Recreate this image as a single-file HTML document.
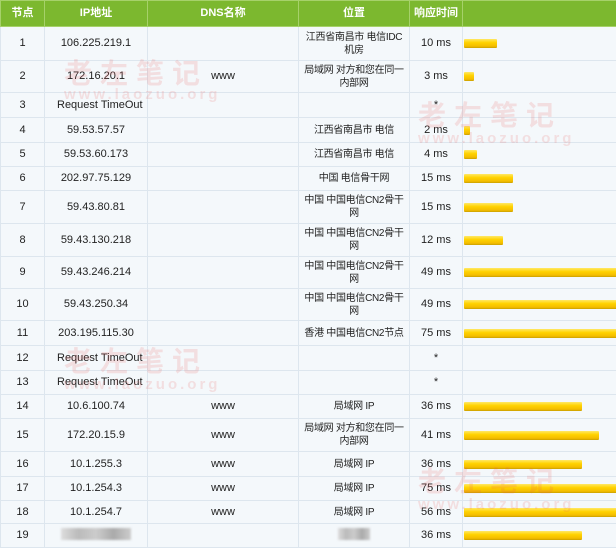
<!DOCTYPE html>
<html><head><meta charset="utf-8"><style>
*{margin:0;padding:0;box-sizing:border-box}
body{width:616px;height:546px;overflow:hidden;background:#f4f8fb;font-family:"Liberation Sans","Noto Sans CJK SC",sans-serif;font-size:11px;color:#222;position:relative}
table{border-collapse:collapse;table-layout:fixed;width:616px;position:absolute;top:0;left:0}
td,th{border:1px solid #dde6ee;text-align:center;vertical-align:middle;line-height:13px;padding:0;white-space:nowrap;overflow:hidden}
td.p{font-size:10px;letter-spacing:-0.3px}
th{background:#7cb82f;color:#fff;font-weight:bold;height:26px;border-color:#a6d16a;font-size:11px}
td.l{text-align:left;padding-left:12px}
.b{height:9px;margin-left:1px;background:linear-gradient(#ffe866,#ffd200 40%,#f4bd00 80%,#c9a000);border-radius:1px}
.wm{position:absolute;color:rgba(235,90,90,.16);font-weight:bold;pointer-events:none;white-space:nowrap}
.blur{display:inline-block;height:12px;background:linear-gradient(90deg,#ddd,#bbb,#ccc,#aaa,#ccc);filter:blur(1px)}
</style></head><body>
<table>
<colgroup><col style="width:44px"><col style="width:103px"><col style="width:151px"><col style="width:111px"><col style="width:53px"><col style="width:154px"></colgroup>
<tr><th>节点</th><th>IP地址</th><th>DNS名称</th><th>位置</th><th>响应时间</th><th></th></tr>
<tr style="height:34px"><td>1</td><td>106.225.219.1</td><td></td><td class="p">江西省南昌市 电信IDC<br>机房</td><td>10 ms</td><td><div class="b" style="width:33px"></div></td></tr>
<tr style="height:32px"><td>2</td><td>172.16.20.1</td><td>www</td><td class="p">局域网 对方和您在同一<br>内部网</td><td>3 ms</td><td><div class="b" style="width:10px"></div></td></tr>
<tr style="height:25px"><td>3</td><td class="l">Request TimeOut</td><td></td><td></td><td>*</td><td></td></tr>
<tr style="height:25px"><td>4</td><td>59.53.57.57</td><td></td><td class="p">江西省南昌市 电信</td><td>2 ms</td><td><div class="b" style="width:6px"></div></td></tr>
<tr style="height:24px"><td>5</td><td>59.53.60.173</td><td></td><td class="p">江西省南昌市 电信</td><td>4 ms</td><td><div class="b" style="width:13px"></div></td></tr>
<tr style="height:24px"><td>6</td><td>202.97.75.129</td><td></td><td class="p">中国 电信骨干网</td><td>15 ms</td><td><div class="b" style="width:49px"></div></td></tr>
<tr style="height:33px"><td>7</td><td>59.43.80.81</td><td></td><td class="p">中国 中国电信CN2骨干<br>网</td><td>15 ms</td><td><div class="b" style="width:49px"></div></td></tr>
<tr style="height:33px"><td>8</td><td>59.43.130.218</td><td></td><td class="p">中国 中国电信CN2骨干<br>网</td><td>12 ms</td><td><div class="b" style="width:39px"></div></td></tr>
<tr style="height:32px"><td>9</td><td>59.43.246.214</td><td></td><td class="p">中国 中国电信CN2骨干<br>网</td><td>49 ms</td><td><div class="b" style="width:160px"></div></td></tr>
<tr style="height:32px"><td>10</td><td>59.43.250.34</td><td></td><td class="p">中国 中国电信CN2骨干<br>网</td><td>49 ms</td><td><div class="b" style="width:160px"></div></td></tr>
<tr style="height:25px"><td>11</td><td>203.195.115.30</td><td></td><td class="p">香港 中国电信CN2节点</td><td>75 ms</td><td><div class="b" style="width:160px"></div></td></tr>
<tr style="height:25px"><td>12</td><td class="l">Request TimeOut</td><td></td><td></td><td>*</td><td></td></tr>
<tr style="height:24px"><td>13</td><td class="l">Request TimeOut</td><td></td><td></td><td>*</td><td></td></tr>
<tr style="height:24px"><td>14</td><td>10.6.100.74</td><td>www</td><td class="p">局域网 IP</td><td>36 ms</td><td><div class="b" style="width:118px"></div></td></tr>
<tr style="height:33px"><td>15</td><td>172.20.15.9</td><td>www</td><td class="p">局域网 对方和您在同一<br>内部网</td><td>41 ms</td><td><div class="b" style="width:135px"></div></td></tr>
<tr style="height:25px"><td>16</td><td>10.1.255.3</td><td>www</td><td class="p">局域网 IP</td><td>36 ms</td><td><div class="b" style="width:118px"></div></td></tr>
<tr style="height:24px"><td>17</td><td>10.1.254.3</td><td>www</td><td class="p">局域网 IP</td><td>75 ms</td><td><div class="b" style="width:160px"></div></td></tr>
<tr style="height:23px"><td>18</td><td>10.1.254.7</td><td>www</td><td class="p">局域网 IP</td><td>56 ms</td><td><div class="b" style="width:160px"></div></td></tr>
<tr style="height:24px"><td>19</td><td><span class="blur" style="width:70px"></span></td><td></td><td><span class="blur" style="width:32px"></span></td><td>36 ms</td><td><div class="b" style="width:118px"></div></td></tr>
</table>
<div class="wm" style="left:64px;top:52px;font-size:28px;letter-spacing:8px">老左笔记</div>
<div class="wm" style="left:64px;top:86px;font-size:15px;letter-spacing:3px">www.laozuo.org</div>
<div class="wm" style="left:418px;top:94px;font-size:28px;letter-spacing:8px">老左笔记</div>
<div class="wm" style="left:418px;top:130px;font-size:15px;letter-spacing:3px">www.laozuo.org</div>
<div class="wm" style="left:64px;top:340px;font-size:28px;letter-spacing:8px">老左笔记</div>
<div class="wm" style="left:64px;top:376px;font-size:15px;letter-spacing:3px">www.laozuo.org</div>
<div class="wm" style="left:418px;top:460px;font-size:28px;letter-spacing:8px">老左笔记</div>
<div class="wm" style="left:418px;top:496px;font-size:15px;letter-spacing:3px">www.laozuo.org</div>
</body></html>
